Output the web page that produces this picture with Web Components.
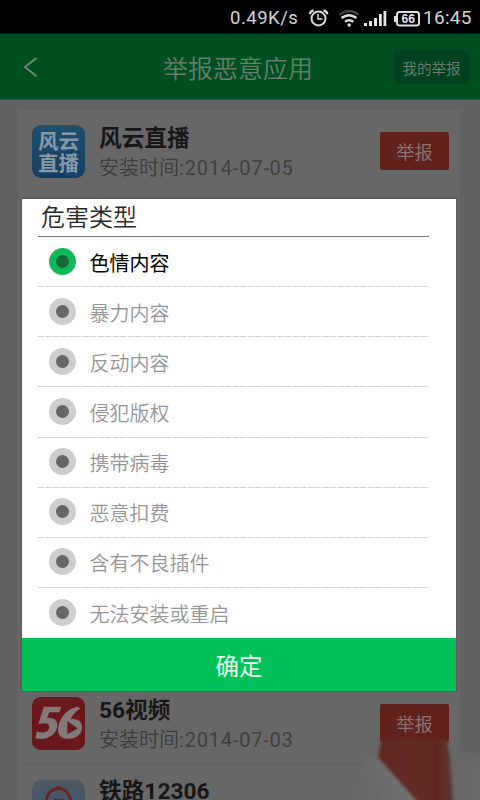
<!DOCTYPE html>
<html lang="zh-CN">
<head>
<meta charset="utf-8">
<title>举报恶意应用</title>
<style>
html,body{margin:0;width:480px;height:800px;overflow:hidden;background:#626262}
body{font-family:Roboto,"Noto Sans CJK SC",sans-serif}
</style>
</head>
<body>
<report-screen></report-screen>
<script>
const define = (name, html) => {
  const t = document.createElement('template');
  t.innerHTML = html;
  customElements.define(name, class extends HTMLElement {
    constructor() {
      super();
      this.attachShadow({mode: 'open'}).appendChild(t.content.cloneNode(true));
    }
  });
};

define('status-bar', `
<style>
:host{display:flex;height:34px;background:#000;color:#d4d4d4;align-items:center;box-sizing:border-box;padding:2px 8px 0 230px;font:400 18.500px/32px Roboto,sans-serif;border-bottom:1px solid #062313}
.speed{width:78px;letter-spacing:.5px;white-space:nowrap}
svg{display:block;flex:none}
.time{margin-left:3px;font-size:19px;letter-spacing:.3px;white-space:nowrap}
</style>
<span class="speed">0.49K/s</span>
<svg width="112" height="28" viewBox="308 3 112 28" fill="none" stroke="#dedede">
<circle cx="318.5" cy="17.5" r="7" stroke-width="1.9"/><path d="M318 13v5h4.5" stroke-width="1.5"/><path d="M309.8 13.2q.3-3 3.8-3.8M323.5 9.4q3.6.8 3.8 3.8" stroke-width="2.2"/>
<path d="M339.5 13.8q9.500-7.500 19 0" stroke="#444" stroke-width="2.4"/>
<path d="M341.500 17q7.500-5.700 15 0M345 20.800q4.200-3 8.400 0" stroke-width="2.400"/><circle cx="349.200" cy="24" r="1.700" fill="#dedede" stroke="none"/>
<path d="M364 22h3v3h-3zM369 20h3v5h-3zM374 17h3v8h-3zM379 13h2.800v12H379zM383.500 10h2.800v15h-2.800z" fill="#e5e5e5" stroke="none"/>
<rect x="397" y="11" width="22" height="13.500" rx="2.500" stroke-width="2"/><path d="M395 15v6" stroke-width="2"/>
<text x="408.300" y="22.300" text-anchor="middle" fill="#e5e5e5" stroke="none" font-family="Liberation Sans,sans-serif" font-weight="700" font-size="12">66</text>
</svg>
<span class="time">16:45</span>`);

define('title-bar', `
<style>
:host{display:flex;height:66px;background:#004f21;align-items:center;box-sizing:border-box;padding:0 11px 0 22px;border-bottom:1px solid #285c3b;color:#658069}
svg{width:18px;height:24px;margin-top:0}
h1{margin:7px 0 0 123px;font-size:25px;line-height:36px;font-weight:350;flex:1}
.mine{background:#00421f;border:1px solid #04401f;border-radius:5px;box-sizing:border-box;width:75px;height:34px;text-align:center;font-size:14.6px;line-height:36px;font-weight:350;color:#72816f}
</style>
<svg viewBox="0 0 18 24" fill="none" stroke="#718674" stroke-width="2"><path d="M14.500 3 3 12l11.500 9.300"/></svg>
<h1><slot></slot></h1><div class="mine"><slot name="action"></slot></div>`);

define('app-row', `
<style>
:host{display:flex;align-items:flex-start;height:82px;box-sizing:border-box;padding:0 11px 0 14px}
.icon{width:53px;height:53px;margin-top:15px}
.info{margin-left:14px;flex:1;padding-top:14px;white-space:nowrap}
.name{font-size:22.700px;line-height:30px;font-weight:700;color:#171717}
.date{font-size:20px;line-height:29px;font-weight:350;color:#3c3c3c}
.date span{letter-spacing:.8px;font-weight:400;color:#404040}
:host([brief]) .date,:host([brief]) .btn{display:none}
:host([brief]) .info{padding-top:12px}
.btn{width:69px;height:38px;margin-top:22px;border-radius:2px;background:#60221b;color:#89746f;text-align:center;font-size:18.300px;line-height:41px;font-weight:400}
</style>
<div class="icon"><slot name="icon"></slot></div>
<div class="info"><div class="name"><slot></slot></div><div class="date">安装时间<span>:<slot name="date"></slot></span></div></div>
<div class="btn">举报</div>`);

define('live-icon', `
<style>
:host{display:block;width:53px;height:53px;border-radius:9px;box-sizing:border-box;padding:6px 0 0;background:linear-gradient(#214f6d,#123f64);color:#8699a5;text-align:center;font-size:20.500px;line-height:22px;font-weight:700}
div{height:22px}
</style><div>风云</div><div>直播</div>`);

define('video-icon', `
<style>:host,svg{display:block;width:53px;height:53px}</style>
<svg viewBox="0 0 54 54"><rect width="54" height="54" rx="9" fill="#6a181c"/>
<path d="M12 10H30l-2 5.500H17.500l-2 6c8-1 11.500 3 10 9.500-1.500 9-13 13.500-22 11l1.500-7c6 2.500 12 1 12.500-4 .5-4-4-5-11-3.500z" fill="#827978"/>
<path fill-rule="evenodd" d="M46 10C35 12 27 23 26.500 33c0 6.500 4.500 10 11 9.500 8 0 13.500-5 13.500-12 0-6-5-9-11.500-8 2-4 5-8 10-11zM36 24.500l10.500 7.500L36 38z" fill="#827978"/></svg>`);

define('rail-icon', `
<style>:host,svg{display:block;width:53px;height:53px}</style>
<svg viewBox="0 0 54 54"><defs><linearGradient id="g" x2="0" y2="1"><stop stop-color="#4f5963"/><stop offset=".6" stop-color="#3f566e"/></linearGradient></defs>
<rect width="54" height="54" rx="9" fill="url(#g)"/><path d="M14.500 54V22a12.500 13 0 0 1 25 0v32" fill="none" stroke="#6d2225" stroke-width="3"/><path d="M22 9q5-6 10 0z" fill="#6d2225"/><path d="M22 19h11v4H22zM25 20h4v30h-4z" fill="#6d2225"/></svg>`);

define('radio-item', `
<style>
:host{display:flex;height:50.150px;flex:none;box-sizing:border-box;align-items:center;padding-left:11px;gap:13.500px;position:relative;color:#959595;font-size:20px;line-height:30px;font-weight:350;white-space:nowrap}
i{flex:none;box-sizing:border-box;width:27px;height:27px;margin-bottom:2px;border-radius:50%;border:7.500px solid #cdcdcd;background:#666}
:host([checked]){color:#000;font-weight:400}
:host([checked]) i{border-color:#10bb57;background:#176939}
span{padding-top:3px}
:host(:not(:last-of-type))::after{content:"";position:absolute;left:0;right:0;bottom:0;height:1px;background:repeating-linear-gradient(90deg,#d2d2d2 0 6px,#f5f5f5 6px 7.500px)}
</style><i></i><span><slot></slot></span>`);

define('choice-dialog', `
<style>
:host{position:absolute;left:22px;top:199px;width:434px;height:492px;box-sizing:border-box;background:#fff;display:flex;flex-direction:column;box-shadow:0 0 1px 1px #5b5b5b}
h2{flex:none;margin:0 27px 0 16px;height:38px;box-sizing:border-box;border-bottom:1px solid #777;padding-left:3px;font-size:24px;line-height:38px;font-weight:350;color:#292929}
.list{flex:none;height:401px;margin:0 27px 0 16px}
.ok{height:53px;background:#02c158;color:#e5fff0;text-align:center;font-size:23.500px;line-height:59px;font-weight:400}
</style>
<h2><slot name="title"></slot></h2><div class="list"><slot></slot></div><div class="ok"><slot name="ok"></slot></div>`);

define('corner-smear', `
<style>:host{position:absolute;right:0;bottom:0;width:130px;height:76px;overflow:hidden}svg{display:block}</style>
<svg width="130" height="76" viewBox="350 724 130 76">
<defs><linearGradient id="l" gradientUnits="userSpaceOnUse" x1="350" x2="410" y1="780" y2="765"><stop stop-color="#676767"/><stop offset="1" stop-color="#727272"/></linearGradient>
<linearGradient id="r"><stop stop-color="#5f2820"/><stop offset=".5" stop-color="#632a22"/><stop offset=".8" stop-color="#5b2822"/><stop offset="1" stop-color="#5c3a35"/></linearGradient>
<linearGradient id="w" x2="1" y2=".4"><stop stop-color="#656565"/><stop offset="1" stop-color="#6c6c6c"/></linearGradient>
<filter id="b" x="-30%" y="-30%" width="160%" height="160%"><feGaussianBlur stdDeviation="4"/></filter>
<filter id="s" x="-20%" y="-20%" width="140%" height="140%"><feGaussianBlur stdDeviation="1.800"/></filter></defs>
<path d="M449 755h45v70h-45z" fill="url(#w)" filter="url(#b)"/>
<path d="M361 820v-57l17-8 14 10 44 55z" fill="url(#l)" filter="url(#b)"/>
<path d="M382 739h65l3 20 4 58h-22l-15-16-39-44z" fill="url(#r)" filter="url(#s)"/>
</svg>`);

define('report-screen', `
<style>
:host{display:block;position:relative;width:480px;height:800px;overflow:hidden;background:#626262}
.card{margin:10px 20px 0 18px;height:690px;background:#676767}
.gap{height:490px;box-sizing:border-box;border-bottom:1px solid #606060}
.last{border-top:1px solid #606060}
</style>
<status-bar></status-bar>
<title-bar>举报恶意应用<span slot="action">我的举报</span></title-bar>
<div class="card">
<app-row><live-icon slot="icon"></live-icon>风云直播<span slot="date">2014-07-05</span></app-row>
<div class="gap"></div>
<app-row><video-icon slot="icon"></video-icon>56视频<span slot="date">2014-07-03</span></app-row>
<app-row class="last" brief><rail-icon slot="icon"></rail-icon>铁路12306</app-row>
</div>
<corner-smear></corner-smear>
<choice-dialog><span slot="title">危害类型</span>
<radio-item checked>色情内容</radio-item><radio-item>暴力内容</radio-item><radio-item>反动内容</radio-item><radio-item>侵犯版权</radio-item><radio-item>携带病毒</radio-item><radio-item>恶意扣费</radio-item><radio-item>含有不良插件</radio-item><radio-item>无法安装或重启</radio-item>
<span slot="ok">确定</span></choice-dialog>`);
</script>
</body>
</html>
